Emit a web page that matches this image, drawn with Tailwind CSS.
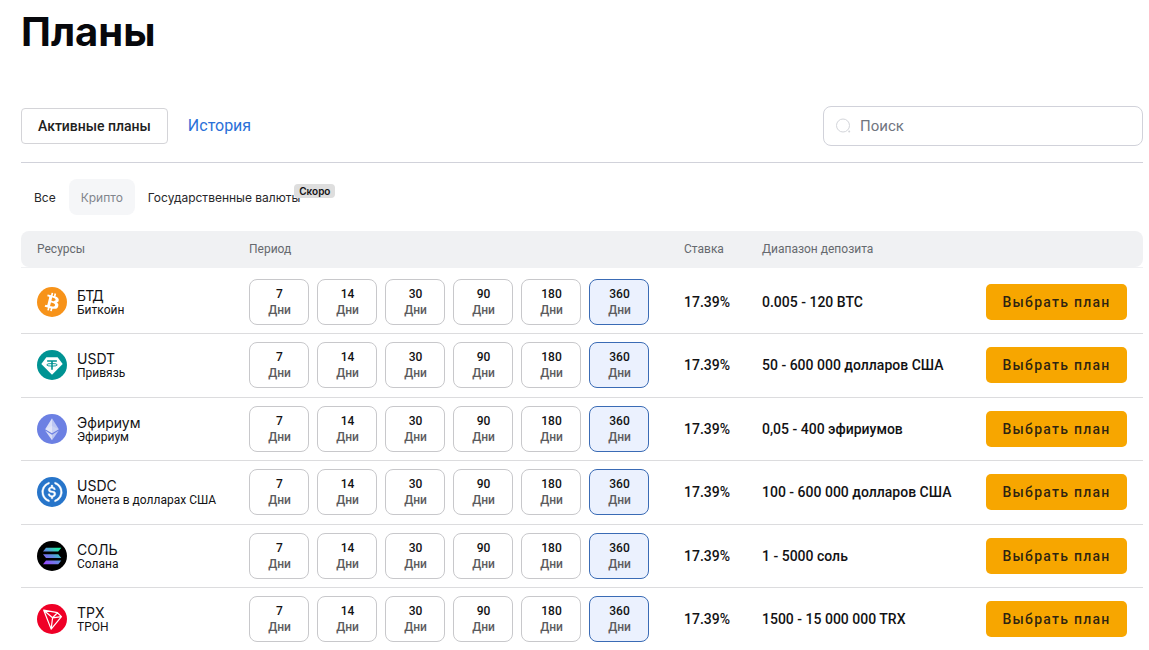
<!DOCTYPE html>
<html lang="ru">
<head>
<meta charset="utf-8">
<meta name="viewport" content="width=device-width, initial-scale=1">
<title>Планы</title>
<script src="https://cdn.jsdelivr.net/npm/@tailwindcss/browser@4"></script>
</head>
<body class="bg-white font-[Roboto,sans-serif] text-[#121214]">
<main class="pl-[21px] pr-[6px] pt-2">
  <h1 class="font-[Inter,sans-serif] text-[40px] leading-12 font-bold text-[#07080c]">Планы</h1>

  <div class="mt-[50px] flex items-center justify-between border-b border-[#d1d2da] pb-4">
    <nav class="flex items-center gap-5">
      <button type="button" class="h-9 rounded border border-[#d4d4d8] px-4 text-[14px] font-medium text-[#212121]">Активные планы</button>
      <a href="#history" class="text-base text-[#2a70d8]">История</a>
    </nav>
    <label class="flex h-10 w-80 items-center gap-2 rounded-lg border border-[#d1d2da] px-3">
      <svg class="size-4 shrink-0" viewBox="0 0 16 16" fill="none" stroke="#d3d5da"><circle cx="7" cy="7.5" r="6.5"/><circle cx="13.2" cy="13.6" r="1" fill="#d3d5da" stroke="none"/></svg>
      <input type="search" aria-label="Поиск" placeholder="Поиск" class="w-full min-w-0 pt-px text-[15px] outline-none placeholder:text-[#71757f]">
    </label>
  </div>

  <div class="mt-4 flex h-9 items-stretch font-[Inter,sans-serif] text-[12px] text-[#27272a]">
    <button type="button" class="px-[13px] pt-px">Все</button>
    <button type="button" class="rounded-lg bg-[#f5f6f8] px-3 pt-px text-[#81858c]">Крипто</button>
    <button type="button" class="relative px-[13px] pt-px">Государственные валюты<span class="absolute top-[5px] right-0 translate-x-[22px] rounded-sm bg-[#dedede] px-[5px] text-[10px] leading-[14px] font-semibold text-[#121214]">Скоро</span></button>
  </div>

  <table class="mt-4 w-full table-fixed border-separate border-spacing-0 text-left whitespace-nowrap">
    <colgroup><col class="w-[212px]"><col class="w-[435px]"><col class="w-[78px]"><col><col class="w-[173px]"></colgroup>
    <thead>
      <tr class="h-9 text-[12px] text-[#66696e]">
        <th class="rounded-l-lg bg-[#f0f1f3] px-4 font-normal">Ресурсы</th>
        <th class="bg-[#f0f1f3] px-4 font-normal">Период</th>
        <th class="bg-[#f0f1f3] px-4 font-normal">Ставка</th>
        <th class="bg-[#f0f1f3] px-4 font-normal">Диапазон депозита</th>
        <th class="rounded-r-lg bg-[#f0f1f3] px-4"></th>
      </tr>
    </thead>
    <tbody id="plans"></tbody>
  </table>
</main>

<template id="row">
  <tr class="group h-[63px] first:h-[67px] even:h-[64px]">
    <td class="border-b border-[#dcdcde] px-4 group-first:border-t group-first:border-t-[#f0f1f3] group-first:pt-[3px] group-even:pb-px">
      <div class="flex items-center gap-[10px]">
        <span data-icon class="size-[30px] shrink-0"></span>
        <div><div data-code class="font-[Inter,sans-serif] text-[14px] leading-4"></div><div data-name class="text-[12px] leading-[13px]"></div></div>
      </div>
    </td>
    <td class="border-b border-[#dcdcde] px-4 group-first:border-t group-first:border-t-[#f0f1f3] group-first:pt-[3px] group-even:pb-px"><div data-periods class="flex gap-2"></div></td>
    <td data-rate class="border-b border-[#dcdcde] px-4 text-[14px] font-medium group-first:border-t group-first:border-t-[#f0f1f3] group-first:pt-[3px] group-even:pb-px">17.39%</td>
    <td data-range class="border-b border-[#dcdcde] px-4 text-[14px] font-medium group-first:border-t group-first:border-t-[#f0f1f3] group-first:pt-[3px] group-even:pb-px"></td>
    <td class="border-b border-[#dcdcde] px-4 group-first:border-t group-first:border-t-[#f0f1f3] group-first:pt-[3px] group-even:pb-px"><button type="button" class="block h-9 w-full rounded-[5px] bg-[#f7a600] text-[14px] font-medium tracking-[0.09em] text-[#121214]/90">Выбрать план</button></td>
  </tr>
</template>

<template id="period">
  <button type="button" class="h-[46px] w-[60px] rounded-lg border border-[#c8c8cb] pl-px text-[12px] leading-4 font-medium aria-pressed:border-[#3a6bb5] aria-pressed:bg-[#ebf1fe]"><span data-n class="block"></span><span class="block text-[12px] text-[#5b5b5e]">Дни</span></button>
</template>

<script>
const svg = inner => `<svg viewBox="0 0 32 32" aria-hidden="true">${inner}</svg>`;
const icons = {
  btc: svg('<circle cx="16" cy="16" r="16" fill="#f7931a"/><path fill="#fff" d="M23.189 14.02c.314-2.096-1.283-3.223-3.465-3.975l.708-2.84-1.728-.43-.69 2.765c-.454-.114-.92-.22-1.385-.326l.695-2.783L15.596 6l-.708 2.839c-.376-.086-.746-.17-1.104-.26l.002-.009-2.384-.595-.46 1.846s1.283.294 1.256.312c.7.175.826.638.805 1.006l-.806 3.235c.048.012.11.03.18.057l-.183-.045-1.13 4.532c-.086.212-.303.531-.793.41.018.025-1.256-.313-1.256-.313l-.858 1.978 2.25.561c.418.105.828.215 1.231.318l-.715 2.872 1.727.43.708-2.84c.472.127.93.245 1.378.357l-.706 2.828 1.728.43.715-2.866c2.948.558 5.164.333 6.097-2.333.752-2.146-.037-3.385-1.588-4.192 1.13-.26 1.98-1.003 2.207-2.538zm-3.95 5.538c-.533 2.147-4.148.986-5.32.695l.95-3.805c1.172.293 4.929.872 4.37 3.11zm.535-5.569c-.487 1.953-3.495.96-4.47.717l.86-3.45c.975.243 4.118.696 3.61 2.733z"/>'),
  usdt: svg('<circle cx="16" cy="16" r="16" fill="#009393"/><path fill="#fff" d="M10 7.8h12l5.4 7.2L16 26.5 4.6 15z"/><path fill="none" stroke="#009393" stroke-width="1.7" d="M10.8 11.8h10.4M16 11.8v9.2"/><ellipse cx="16" cy="15.8" rx="5.6" ry="1.4" fill="none" stroke="#009393"/>'),
  eth: svg('<circle cx="16" cy="16" r="16" fill="#6c80e3"/><g fill="#fff"><path fill-opacity=".55" d="M16 4.5v16.1l7.3-4.3z"/><path fill-opacity=".75" d="M16 4.5L8.7 16.3l7.3 4.3z"/><path fill-opacity=".2" d="M16 12.9v7.7l7.3-4.3zM16 12.9l-7.3 3.4 7.3 4.3z"/><path fill-opacity=".55" d="M16 22v5.9l7.3-10.2z"/><path fill-opacity=".75" d="M16 27.9V22l-7.3-4.3z"/></g>'),
  usdc: svg('<circle cx="16" cy="16" r="16" fill="#2775ca"/><g fill="#fff" stroke="#fff" stroke-width=".4"><path d="M20.022 18.124c0-2.124-1.28-2.852-3.84-3.156-1.828-.243-2.193-.728-2.193-1.578 0-.85.61-1.396 1.828-1.396 1.097 0 1.707.364 2.011 1.275a.458.458 0 00.427.303h.975a.416.416 0 00.427-.425v-.06a3.04 3.04 0 00-2.743-2.489V9.142c0-.243-.183-.425-.487-.486h-.915c-.243 0-.426.182-.487.486v1.396c-1.829.242-2.986 1.456-2.986 2.974 0 2.002 1.218 2.791 3.778 3.095 1.707.303 2.255.668 2.255 1.639 0 .97-.853 1.638-2.011 1.638-1.585 0-2.133-.667-2.316-1.578-.06-.242-.244-.364-.427-.364h-1.036a.416.416 0 00-.426.425v.06c.243 1.518 1.219 2.61 3.23 2.914v1.457c0 .242.183.425.487.485h.915c.243 0 .426-.182.487-.485V21.34c1.829-.303 3.047-1.578 3.047-3.217z"/><path d="M12.892 24.497c-4.754-1.7-7.192-6.98-5.424-11.653.914-2.55 2.925-4.491 5.424-5.402.244-.121.365-.303.365-.607v-.85c0-.242-.121-.424-.365-.485-.061 0-.183 0-.244.06a10.895 10.895 0 00-7.13 13.717c1.096 3.4 3.717 6.01 7.13 7.102.244.121.488 0 .548-.243.061-.06.061-.122.061-.243v-.85c0-.182-.182-.424-.365-.546zm6.46-18.936c-.244-.122-.488 0-.548.242-.061.061-.061.122-.061.243v.85c0 .243.182.485.365.607 4.754 1.7 7.192 6.98 5.424 11.653-.914 2.55-2.925 4.491-5.424 5.402-.244.121-.365.303-.365.607v.85c0 .242.121.424.365.485.061 0 .183 0 .244-.06a10.895 10.895 0 007.13-13.717c-1.096-3.46-3.778-6.07-7.13-7.162z"/></g>'),
  sol: svg('<defs><linearGradient id="sol" gradientUnits="userSpaceOnUse" x1="9" y1="25" x2="24" y2="7"><stop offset="0" stop-color="#9945ff"/><stop offset=".5" stop-color="#5f8fe0"/><stop offset="1" stop-color="#19fb9b"/></linearGradient></defs><circle cx="16" cy="16" r="16" fill="#000"/><path fill="url(#sol)" d="M9.6 7.3h16.3l-3.2 4H6.4zM6.4 14h16.3l3.2 4H9.6zM9.6 20.7h16.3l-3.2 4H6.4z"/>'),
  trx: svg('<circle cx="16" cy="16" r="16" fill="#ef0027"/><path fill="none" stroke="#fff" stroke-width="1.3" stroke-linejoin="round" d="M7.2 6.6l14.6 2.7 4.3 4.2-11 13.3zM7.2 6.6l9.4 8.1 5.2-5.4M16.6 14.7l9.5-1.2M16.6 14.7l-1.5 12.1"/>')
};
const plans = [
  ['btc', 'БТД', 'Биткойн', '0.005 - 120 BTC'],
  ['usdt', 'USDT', 'Привязь', '50 - 600 000 долларов США'],
  ['eth', 'Эфириум', 'Эфириум', '0,05 - 400 эфириумов'],
  ['usdc', 'USDC', 'Монета в долларах США', '100 - 600 000 долларов США'],
  ['sol', 'СОЛЬ', 'Солана', '1 - 5000 соль'],
  ['trx', 'ТРХ', 'ТРОН', '1500 - 15 000 000 TRX']
];
for (const [icon, code, name, range] of plans) {
  const row = document.getElementById('row').content.cloneNode(true);
  row.querySelector('[data-icon]').innerHTML = icons[icon];
  row.querySelector('[data-code]').textContent = code;
  row.querySelector('[data-name]').textContent = name;
  row.querySelector('[data-range]').textContent = range;
  for (const n of [7, 14, 30, 90, 180, 360]) {
    const p = document.getElementById('period').content.cloneNode(true);
    p.querySelector('[data-n]').textContent = n;
    p.querySelector('button').setAttribute('aria-pressed', n === 360);
    row.querySelector('[data-periods]').append(p);
  }
  document.getElementById('plans').append(row);
}
</script>
</body>
</html>
